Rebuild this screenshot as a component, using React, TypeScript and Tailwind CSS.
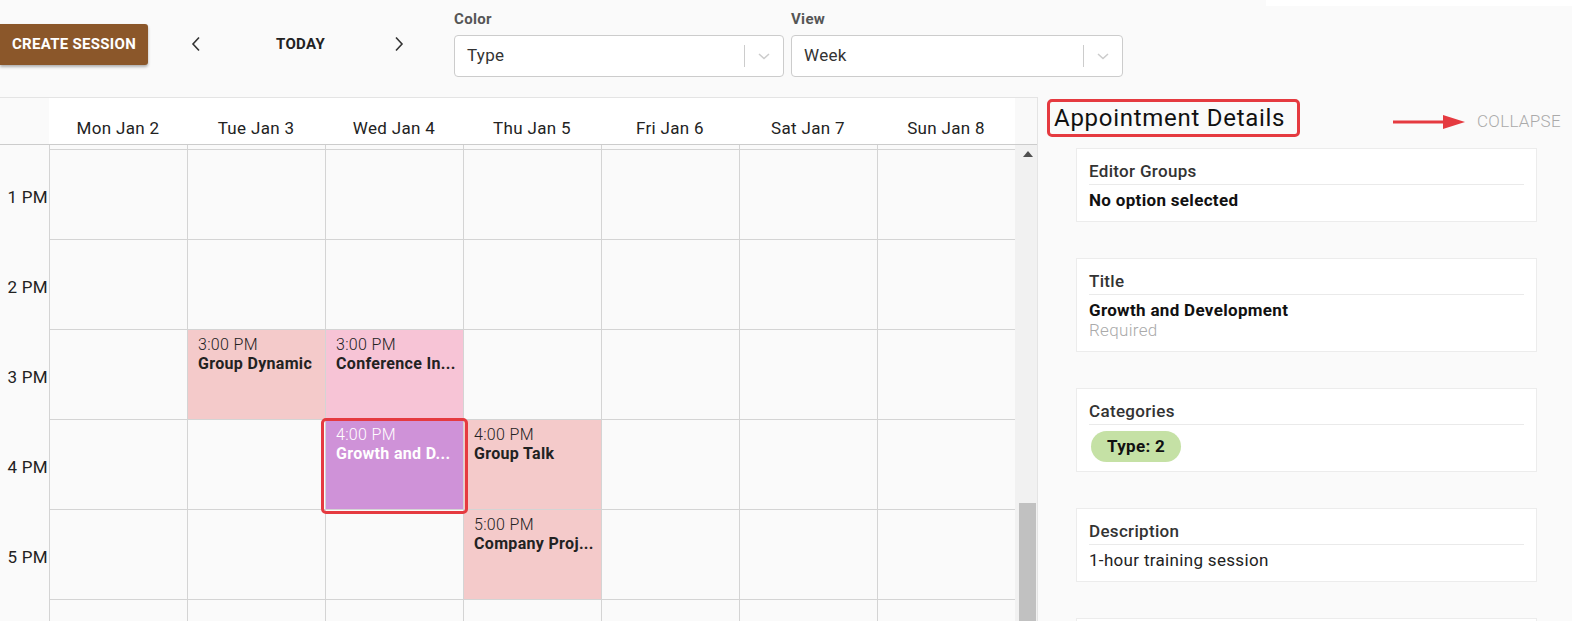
import React from "react";

const days = ["Mon Jan 2", "Tue Jan 3", "Wed Jan 4", "Thu Jan 5", "Fri Jan 6", "Sat Jan 7", "Sun Jan 8"];

type Ev = { time: string; title: string; bg: string; light?: boolean; selected?: boolean };

const events: Record<string, Ev> = {
  "2-1": { time: "3:00 PM", title: "Group Dynamic", bg: "bg-[#f4caca]" },
  "2-2": { time: "3:00 PM", title: "Conference In...", bg: "bg-[#f7c4d6]" },
  "3-2": { time: "4:00 PM", title: "Growth and D...", bg: "bg-[#cf92d8]", light: true, selected: true },
  "3-3": { time: "4:00 PM", title: "Group Talk", bg: "bg-[#f4caca]" },
  "4-3": { time: "5:00 PM", title: "Company Proj...", bg: "bg-[#f4caca]" },
};

const hours = ["1 PM", "2 PM", "3 PM", "4 PM", "5 PM"];

function Chevron({ dir }: { dir: "left" | "right" }) {
  return (
    <svg width="10" height="16" viewBox="0 0 10 16" fill="none">
      {dir === "left" ? (
        <path d="M8 1.5L2 8l6 6.5" stroke="#333" strokeWidth="1.6" />
      ) : (
        <path d="M2 1.5L8 8l-6 6.5" stroke="#333" strokeWidth="1.6" />
      )}
    </svg>
  );
}

function Select({ label, value, width }: { label: string; value: string; width: string }) {
  return (
    <div className={`flex flex-col ${width}`}>
      <div className="text-[15px] leading-[16px] font-bold text-[#555] mt-[11px] mb-[8px]">{label}</div>
      <div className="h-[42px] border border-[#cccccc] rounded-[4px] bg-white flex items-center pl-[12px]">
        <span className="flex-1 text-[17px] text-[#333]">{value}</span>
        <span className="w-px h-[22px] bg-[#cccccc]" />
        <span className="w-[38px] flex items-center justify-center">
          <svg width="14" height="10" viewBox="0 0 14 10" fill="none">
            <path d="M2 3l5 4.5L12 3" stroke="#cccccc" strokeWidth="1.5" />
          </svg>
        </span>
      </div>
    </div>
  );
}

function Card({ label, children }: { label: string; children: React.ReactNode }) {
  return (
    <div className="w-[461px] bg-white border border-[#ececec] px-[12px] pt-[12px] pb-[11px] shrink-0">
      <div className="text-[17px] leading-[20px] font-medium text-[#333] pb-[3px] border-b border-[#eaeaea]">{label}</div>
      <div className="pt-[5px]">{children}</div>
    </div>
  );
}

export default function App() {
  return (
    <div
      className="w-[1572px] h-[621px] bg-[#fafafa] overflow-hidden flex flex-col tracking-[0.02em]"
      style={{ fontFamily: "Roboto, 'Liberation Sans', sans-serif" }}
    >
      {/* Toolbar */}
      <div className="h-[97px] flex items-start shrink-0">
        <button className="mt-[24px] h-[41px] w-[148px] bg-[#8b572a] text-white text-[15px] font-bold rounded-r-[3px] shadow-[0_2px_3px_rgba(0,0,0,0.3)] tracking-[0.02em]">
          CREATE SESSION
        </button>
        <div className="w-[306px] h-[88px] flex items-center">
          <span className="ml-[43px] w-[10px] flex"><Chevron dir="left" /></span>
          <span className="flex-1 text-center text-[15px] font-bold text-[#222] pl-[6px]">TODAY</span>
          <span className="mr-[50px] w-[10px] flex"><Chevron dir="right" /></span>
        </div>
        <Select label="Color" value="Type" width="w-[330px]" />
        <div className="w-[7px]" />
        <Select label="View" value="Week" width="w-[332px]" />
        <div className="ml-auto w-[306px] h-[6px] bg-white" />
      </div>

      <div className="flex flex-1 min-h-0">
        {/* Calendar */}
        <div className="w-[1037px] flex flex-col border-t border-[#e4e4e4] shrink-0">
          <div className="h-[47px] flex border-b border-[#cccccc] shrink-0">
            <div className="w-[49px] bg-[#fafafa] shrink-0" />
            {days.map((d) => (
              <div key={d} className="w-[138px] shrink-0 bg-white flex items-end justify-center pb-[6px] text-[17px] leading-[20px] text-[#222]">
                {d}
              </div>
            ))}
            <div className="w-[22px] shrink-0 bg-[#f9f9f9]" />
          </div>
          <div className="flex flex-1 min-h-0">
            <div className="w-[1015px] shrink-0 flex flex-col overflow-hidden">
              <div className="h-[5px] flex shrink-0">
                <div className="w-[49px] shrink-0" />
                {days.map((d) => (
                  <div key={d} className="w-[138px] shrink-0 border-l border-b border-[#d4d4d4]" />
                ))}
              </div>
              {[...hours, ""].map((h, r) => (
                <div key={r} className="h-[90px] flex shrink-0">
                  <div className="w-[49px] shrink-0 flex items-center justify-end pr-[1px] pt-[6px] text-[17px] text-[#222] whitespace-nowrap">{h}</div>
                  {days.map((d, c) => {
                    const ev = events[`${r}-${c}`];
                    return (
                      <div key={d} className={`w-[138px] shrink-0 border-l border-b border-[#d4d4d4] relative ${ev ? ev.bg : ""}`}>
                        {ev && (
                          <div className={`pl-[10px] pt-[5px] text-[16px] leading-[19px] ${ev.light ? "text-white" : "text-[#222]"}`}>
                            <div className="font-light">{ev.time}</div>
                            <div className="font-bold whitespace-nowrap">{ev.title}</div>
                          </div>
                        )}
                        {ev?.selected && (
                          <div className="absolute z-10 left-[-5px] top-[-2px] w-[147px] h-[96px] border-[3px] border-[#e53a40] rounded-[5px]" />
                        )}
                      </div>
                    );
                  })}
                </div>
              ))}
            </div>
            <div className="w-[22px] shrink-0 bg-[#f1f1f1] flex flex-col pl-[4px] pr-[1px]">
              <div className="h-[18px] flex items-center justify-center">
                <svg width="10" height="6" viewBox="0 0 10 6">
                  <path d="M0 6L5 0l5 6z" fill="#505050" />
                </svg>
              </div>
              <div className="mt-auto h-[118px] bg-[#c1c1c1]" />
            </div>
          </div>
        </div>

        {/* Details panel */}
        <div className="flex-1 border-l border-[#e4e4e4] flex flex-col min-w-0">
          <div className="h-[51px] flex items-start shrink-0">
            <div className="ml-[9px] mt-[2px] h-[38px] w-[253px] border-[3px] border-[#e53a40] rounded-[5px] flex items-center pl-[4px]">
              <span className="text-[24px] text-[#111] whitespace-nowrap tracking-[0.03em]">Appointment Details</span>
            </div>
            <div className="ml-auto mr-[11px] mt-[12px] flex items-center">
              <svg width="74" height="18" viewBox="0 0 74 18" className="mr-[10px]">
                <path d="M0 9h54" stroke="#e53a40" strokeWidth="3" />
                <path d="M50 2l22 7-22 7z" fill="#e53a40" />
              </svg>
              <span className="text-[17px] text-[#aaaaaa] font-light">COLLAPSE</span>
            </div>
          </div>
          <div className="pl-[38px] flex flex-col gap-[36px]">
            <Card label="Editor Groups">
              <div className="text-[17px] leading-[20px] font-bold text-[#111]">No option selected</div>
            </Card>
            <Card label="Title">
              <div className="text-[17px] leading-[20px] font-bold text-[#111]">Growth and Development</div>
              <div className="text-[17px] leading-[20px] font-light text-[#aaaaaa]">Required</div>
            </Card>
            <Card label="Categories">
              <div className="pl-[2px] pt-[1px] -mb-[2px]">
                <span className="inline-flex items-center h-[31px] px-[16px] rounded-full bg-[#c5e1a5] text-[17px] font-bold text-[#111]">
                  Type: 2
                </span>
              </div>
            </Card>
            <Card label="Description">
              <div className="text-[17px] leading-[20px] text-[#222]">1-hour training session</div>
            </Card>
            <div className="w-[461px] h-[40px] bg-white border border-[#ececec] shrink-0" />
          </div>
        </div>
      </div>
    </div>
  );
}
